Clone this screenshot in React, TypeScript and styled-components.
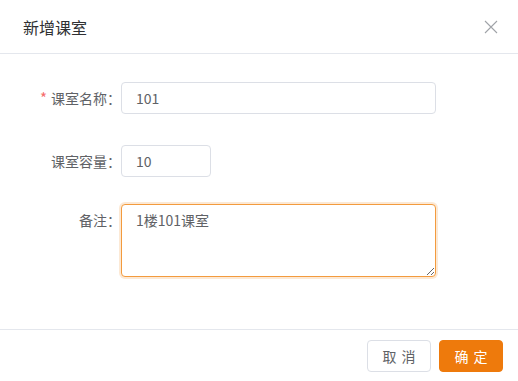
import styled, { createGlobalStyle } from "styled-components";

const GlobalStyle = createGlobalStyle`
  body {
    margin: 0;
    background: #fff;
    font-family: "Noto Sans CJK SC", "Liberation Sans", sans-serif;
  }
`;

const ORANGE = "#ee7a0c";

export default function App() {
  return (
    <>
      <GlobalStyle />
      <Dialog>
        <Header>
          <Title>新增课室</Title>
          <Close aria-label="close">
            <svg width="14" height="14" viewBox="0 0 14 14">
              <path d="M1 1 L13 13 M13 1 L1 13" stroke="#a0a3a8" strokeWidth="1.1" fill="none" />
            </svg>
          </Close>
        </Header>
        <Body>
          <Row $gap={31}>
            <Label>
              <Star>*</Star>课室名称：
            </Label>
            <Input defaultValue="101" $width={315} />
          </Row>
          <Row $gap={27}>
            <Label>课室容量：</Label>
            <Input defaultValue="10" $width={90} />
          </Row>
          <Row $gap={0}>
            <Label>备注：</Label>
            <TextArea defaultValue="1楼101课室" />
          </Row>
        </Body>
        <Footer>
          <Button>取 消</Button>
          <Button $primary>确 定</Button>
        </Footer>
      </Dialog>
    </>
  );
}

const Dialog = styled.div`
  width: 518px;
  height: 381px;
  display: flex;
  flex-direction: column;
  background: #fff;
`;

const Header = styled.div`
  height: 53px;
  display: flex;
  align-items: center;
  justify-content: space-between;
  padding: 0 20px 0 23px;
  border-bottom: 1px solid #e4e7ed;
`;

const Title = styled.div`
  font-size: 16px;
  color: #303133;
  line-height: 24px;
`;

const Close = styled.button`
  border: none;
  background: none;
  padding: 0;
  display: flex;
  margin-top: 1px;
  cursor: pointer;
`;

const Body = styled.div`
  flex: 1;
  padding: 28px 0 0 20px;
`;

const Row = styled.div<{ $gap: number }>`
  display: flex;
  align-items: flex-start;
  margin-bottom: ${(p) => p.$gap}px;
`;

const Label = styled.label`
  width: 101px;
  flex-shrink: 0;
  text-align: right;
  font-size: 14px;
  line-height: 32px;
  color: #606266;
`;

const Star = styled.span`
  color: #f56c6c;
  font-size: 15px;
  margin-right: 4px;
`;

const Input = styled.input<{ $width: number }>`
  box-sizing: border-box;
  width: ${(p) => p.$width}px;
  height: 32px;
  padding: 0 14px;
  border: 1px solid #dcdfe6;
  border-radius: 4px;
  font-family: inherit;
  font-size: 14px;
  color: #606266;
  outline: none;
`;

const TextArea = styled.textarea`
  box-sizing: border-box;
  width: 315px;
  height: 73px;
  padding: 5px 14px;
  border: 1px solid #f39b3e;
  border-radius: 4px;
  box-shadow: 0 0 0 2px rgba(243, 155, 62, 0.22);
  font-family: inherit;
  font-size: 14px;
  line-height: 21px;
  color: #606266;
  outline: none;
  resize: vertical;
`;

const Footer = styled.div`
  height: 52px;
  box-sizing: border-box;
  border-top: 1px solid #e4e7ed;
  display: flex;
  justify-content: flex-end;
  align-items: flex-start;
  gap: 8px;
  padding: 10px 15px 0;
`;

const Button = styled.button<{ $primary?: boolean }>`
  width: 64px;
  height: 32px;
  padding: 0 0 0 1px;
  border-radius: 4px;
  font-family: inherit;
  font-size: 14px;
  letter-spacing: 1px;
  white-space: pre;
  cursor: pointer;
  border: 1px solid ${(p) => (p.$primary ? ORANGE : "#dcdfe6")};
  background: ${(p) => (p.$primary ? ORANGE : "#fff")};
  color: ${(p) => (p.$primary ? "#fff" : "#606266")};
`;
